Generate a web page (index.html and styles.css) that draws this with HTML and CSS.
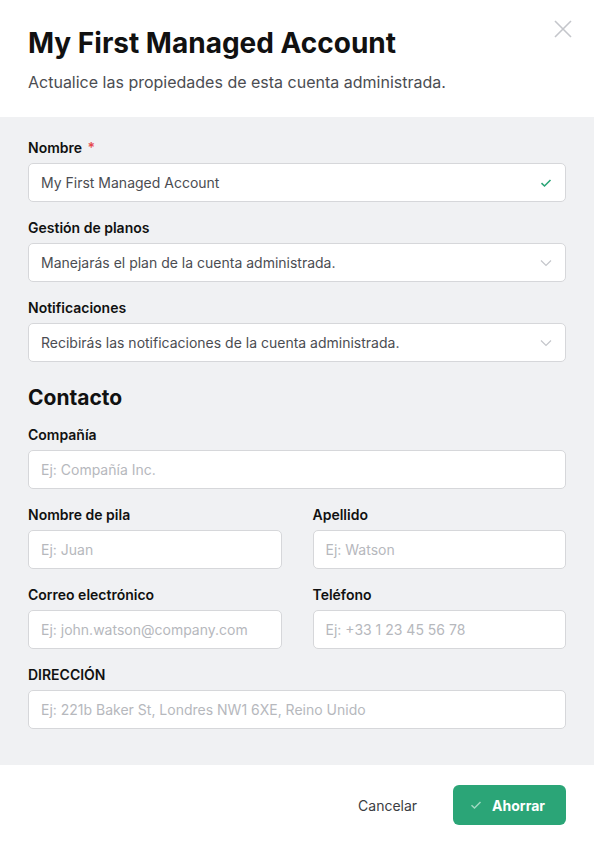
FILE: index.html
```html
<!doctype html>
<html>
	<head>
		<title>My First Managed Account</title>
		<link rel="stylesheet" href="styles.css">
	</head>

	<body>
		<div class="modal">
			<div class="modal-header">
				<h1>My First Managed Account</h1>
				<p class="subtitle">Actualice las propiedades de esta cuenta administrada.</p>
				<button class="close" aria-label="Cerrar">
					<svg width="18" height="18" viewBox="0 0 18 18">
						<path d="M1 1L17 17M17 1L1 17" stroke="#c4c6cb" stroke-width="1.6" fill="none" />
					</svg>
				</button>
			</div>

			<div class="modal-body">
				<div class="field">
					<label>Nombre <span class="required">*</span></label>
					<div class="control">
						<span class="value">My First Managed Account</span>
						<svg class="icon" width="12" height="10" viewBox="0 0 12 10">
							<path d="M1.5 5.2L4.5 8L10.5 2" stroke="#2ba577" stroke-width="1.6" fill="none" />
						</svg>
					</div>
				</div>

				<div class="field">
					<label>Gestión de planos</label>
					<div class="control">
						<span class="value">Manejarás el plan de la cuenta administrada.</span>
						<svg class="icon" width="12" height="8" viewBox="0 0 12 8">
							<path d="M1 1.5L6 6.5L11 1.5" stroke="#c4c6cb" stroke-width="1.2" fill="none" />
						</svg>
					</div>
				</div>

				<div class="field">
					<label>Notificaciones</label>
					<div class="control">
						<span class="value">Recibirás las notificaciones de la cuenta administrada.</span>
						<svg class="icon" width="12" height="8" viewBox="0 0 12 8">
							<path d="M1 1.5L6 6.5L11 1.5" stroke="#c4c6cb" stroke-width="1.2" fill="none" />
						</svg>
					</div>
				</div>

				<h2>Contacto</h2>

				<div class="field">
					<label>Compañía</label>
					<div class="control"><span class="placeholder">Ej: Compañía Inc.</span></div>
				</div>

				<div class="row">
					<div class="field">
						<label>Nombre de pila</label>
						<div class="control"><span class="placeholder">Ej: Juan</span></div>
					</div>
					<div class="field">
						<label>Apellido</label>
						<div class="control"><span class="placeholder">Ej: Watson</span></div>
					</div>
				</div>

				<div class="row">
					<div class="field">
						<label>Correo electrónico</label>
						<div class="control"><span class="placeholder">Ej: john.watson@company.com</span></div>
					</div>
					<div class="field">
						<label>Teléfono</label>
						<div class="control"><span class="placeholder">Ej: +33 1 23 45 56 78</span></div>
					</div>
				</div>

				<div class="field">
					<label>DIRECCIÓN</label>
					<div class="control"><span class="placeholder">Ej: 221b Baker St, Londres NW1 6XE, Reino Unido</span></div>
				</div>
			</div>

			<div class="modal-footer">
				<button class="btn-cancel">Cancelar</button>
				<button class="btn-save">
					<svg width="12" height="10" viewBox="0 0 12 10">
						<path d="M1.5 5.2L4.5 8L10.5 2" stroke="#9fd9c1" stroke-width="1.5" fill="none" />
					</svg>
					Ahorrar
				</button>
			</div>
		</div>
	</body>
</html>
```

FILE: styles.css
```css
:root {
	--green: #2ba577;
	--gray-bg: #f0f1f3;
	--border: #d6d7da;
	--text: #111111;
	--text-muted: #4b4d52;
	--placeholder: #b6b8bd;
}

body {
	margin: 0;
	font-family: Inter, "Noto Sans", sans-serif;
	color: var(--text);
	background-color: #ffffff;
}

.modal {
	width: 594px;
	min-height: 847px;
	display: flex;
	flex-direction: column;
}

.modal-header {
	position: relative;
	padding: 27px 28px 24px;
}

h1 {
	margin: 0;
	font-size: 28px;
	line-height: 32px;
	font-weight: 700;
}

.subtitle {
	margin: 12px 0 0;
	font-size: 16px;
	line-height: 22px;
	color: var(--text-muted);
}

.close {
	position: absolute;
	top: 20px;
	right: 22px;
	padding: 0;
	border: none;
	background: none;
	cursor: pointer;
}

.modal-body {
	background-color: var(--gray-bg);
	padding: 23px 28px 36px;
	display: flex;
	flex-direction: column;
	gap: 18px;
}

.field {
	display: flex;
	flex-direction: column;
	gap: 7px;
	min-width: 0;
}

label {
	font-size: 14px;
	line-height: 16px;
	font-weight: 600;
	color: var(--text);
}

.required {
	color: #e5484d;
	margin-left: 2px;
}

.control {
	height: 39px;
	box-sizing: border-box;
	background-color: #ffffff;
	border: 1px solid var(--border);
	border-radius: 5px;
	padding: 0 13px 0 12px;
	display: flex;
	align-items: center;
	justify-content: space-between;
	font-size: 14px;
}

.value {
	color: var(--text-muted);
}

.placeholder {
	color: var(--placeholder);
	white-space: nowrap;
}

h2 {
	margin: 6px 0 -1px;
	font-size: 21px;
	line-height: 24px;
	font-weight: 700;
}

.row {
	display: grid;
	grid-template-columns: 1fr 1fr;
	column-gap: 31px;
}

.modal-footer {
	flex: 1;
	display: flex;
	justify-content: flex-end;
	align-items: flex-start;
	gap: 36px;
	padding: 20px 28px 0;
}

.modal-footer button {
	height: 40px;
	border: none;
	font-family: inherit;
	font-size: 14px;
	cursor: pointer;
}

.btn-cancel {
	background: none;
	color: #3b3d42;
	padding: 0;
}

.btn-save {
	background-color: var(--green);
	color: #ffffff;
	font-weight: 700;
	border-radius: 6px;
	padding: 0 21px 0 17px;
	display: flex;
	align-items: center;
	gap: 10px;
}
```
